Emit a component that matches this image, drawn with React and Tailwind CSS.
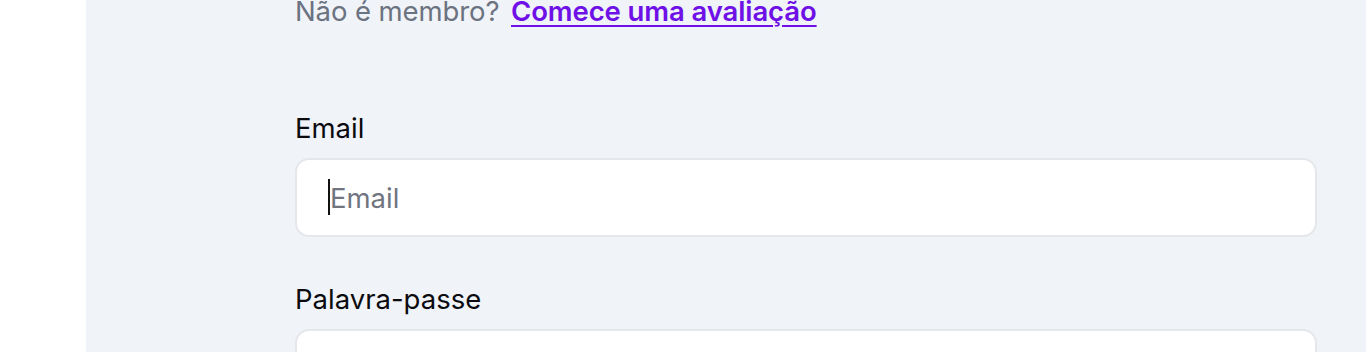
import React, { useState } from 'react';

const App = () => {
  const [email, setEmail] = useState('');
  const [password, setPassword] = useState('');

  return (
    <div className="flex w-full h-[352px] overflow-hidden bg-white font-['Inter',sans-serif]">
      {/* left white strip */}
      <div className="w-[86px] shrink-0 bg-white" />

      {/* form area */}
      <div className="flex-1 bg-[#f0f3f8] pl-[209px] pr-[49px]">
        <p className="-mt-[5px] text-[27.5px] leading-[32px] text-[#6b7280] tracking-[-0.1px]">
          Não é membro?{' '}
          <a href="#" className="ml-[4px] font-semibold text-[#6e10e6] underline underline-offset-[4px] decoration-2">
            Comece uma avaliação
          </a>
        </p>

        <div className="mt-[85px] flex flex-col">
          <label className="text-[27.5px] leading-[32px] text-[#0b0b0f]">Email</label>
          <div className="relative mt-[14px]">
            <input
              type="email"
              value={email}
              onChange={(e) => setEmail(e.target.value)}
              placeholder="Email"
              className="h-[79px] w-full rounded-[14px] border-2 border-[#e5e7eb] bg-white px-[33px] text-[27.5px] text-gray-900 placeholder:text-[#70757f] focus:outline-none caret-black"
            />
            {/* text caret */}
            <span className="pointer-events-none absolute left-[33px] top-[21px] h-[36px] w-[2px] bg-[#111]" />
          </div>
        </div>

        <div className="mt-[46px] flex flex-col">
          <label className="text-[27.5px] leading-[32px] text-[#0b0b0f]">Palavra-passe</label>
          <input
            type="password"
            value={password}
            onChange={(e) => setPassword(e.target.value)}
            className="mt-[14px] h-[79px] w-full rounded-[14px] border-2 border-[#e5e7eb] bg-white px-[33px] text-[27.5px] focus:outline-none"
          />
        </div>
      </div>
    </div>
  );
};

export default App;
